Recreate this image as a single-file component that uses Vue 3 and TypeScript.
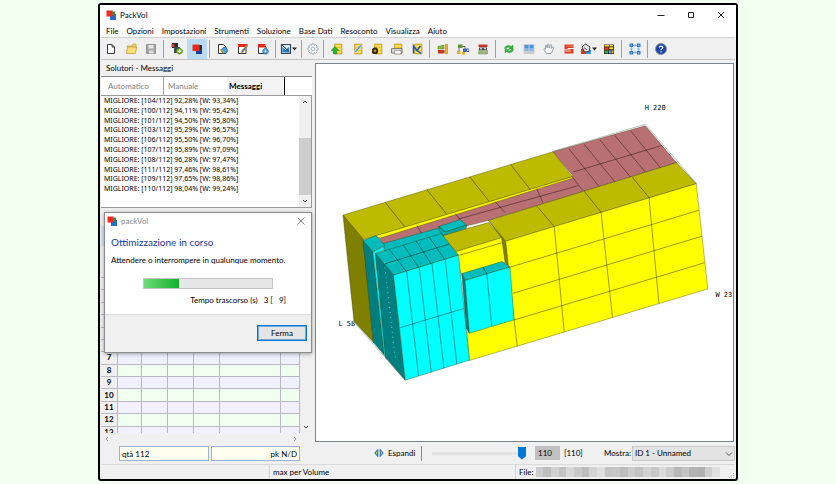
<script setup lang="ts">
import { ref } from 'vue'

interface Shape {
  d: string
  fill?: string
  stroke?: string
  w?: number
}
interface Tool {
  label: string
  shapes: Shape[]
  kind?: 'active' | 'narrow' | 'drop'
}

const menus = ['File', 'Opzioni', 'Impostazioni', 'Strumenti', 'Soluzione', 'Base Dati', 'Resoconto', 'Visualizza', 'Aiuto']

const database: Shape[] = [
  { d: 'M3.500 1h7.500v10H3.500z', fill: '#f5c518', stroke: '#b08410', w: 0.5 },
  { d: 'M4.500 2.500h5.500v1H4.500zM4.500 5.500h5.500v1H4.500zM4.500 8.500h5.500v1H4.500z', fill: '#fff3a8' },
]
const page: Shape = { d: 'M1.500 1.500h5l2.500 2.500v6.500H1.500z', fill: '#fff', stroke: '#333', w: 1 }
const arrow: Shape = { d: 'M12 4.500h5l-2.500 3z', fill: '#222' }

const groups: Tool[][] = [
  [
    { label: 'Nuovo', shapes: [{ d: 'M2.500 1.500h4.500l2.500 2.500v6.500h-7zM7 1.500v2.500h2.500', fill: '#fff', stroke: '#3a3a3a', w: 1 }] },
    {
      label: 'Apri',
      shapes: [
        { d: 'M2 3h5l1-2h3v3H2z', fill: '#efd27a', stroke: '#c79d34', w: 0.7 },
        { d: 'M1.500 10.500l1-6.500h9l-1 6.500z', fill: '#fbe07a', stroke: '#c79d34', w: 0.8 },
      ],
    },
    {
      label: 'Salva',
      shapes: [
        { d: 'M1.500 1.500h9v9h-9z', fill: '#a8a8a8', stroke: '#929292', w: 1 },
        { d: 'M3.500 2h5v3.500h-5z', fill: '#e6e6e6' },
        { d: 'M4 7.500h4.500v3H4z', fill: '#dcdcdc' },
      ],
    },
  ],
  [
    {
      label: 'Aggiungi collo',
      shapes: [
        { d: 'M1 0h6v5H1z', fill: '#252d36' },
        { d: 'M0.500 1h3v3h-3z', fill: '#d43c2e' },
        { d: 'M3 4h6v6H3z', fill: '#3b4d57' },
        { d: 'M8.500 5.200a3 3 0 1 0 .01 0z', fill: '#7cbd2b', stroke: '#4b861c', w: 0.6 },
        { d: 'M8.500 6.500v3.400M6.800 8.200h3.400', stroke: '#fff', w: 1.1 },
      ],
    },
    {
      label: 'Risolvi',
      kind: 'active',
      shapes: [
        { d: 'M5 5h6v6H5z', fill: '#1c3f9e' },
        { d: 'M6 2h5v5H6z', fill: '#203324' },
        { d: 'M1.500 1.500h7v6.500h-7z', fill: '#f0281e' },
      ],
    },
  ],
  [
    {
      label: 'Anteprima',
      shapes: [
        page,
        { d: 'M7.500 4.500a3 3 0 1 0 .01 0z', fill: '#4ea3dc', stroke: '#1c5b90', w: 0.8 },
        { d: 'M3 6.500l4 3.500', stroke: '#d89b20', w: 1.3 },
      ],
    },
    {
      label: 'Modifica PDF',
      shapes: [
        page,
        { d: 'M1 1h9.500v3H1z', fill: '#e4271c' },
        { d: 'M10.500 3.500l-4.500 6-2 .5.500-2 4.500-5.500z', fill: '#3d76c4', stroke: '#e5ad2e', w: 0.7 },
      ],
    },
    {
      label: 'Opzioni PDF',
      shapes: [
        page,
        { d: 'M1 1h7.500v3.500H1z', fill: '#e4271c' },
        { d: 'M8.500 5.500a2.800 2.800 0 1 0 .01 0z', fill: '#4798dd', stroke: '#1f69ad', w: 0.7 },
        { d: 'M8.500 7.200a1 1 0 1 0 .01 0z', fill: '#fff' },
      ],
    },
  ],
  [
    {
      label: 'Esporta immagine',
      kind: 'drop',
      shapes: [
        { d: 'M1.500 1.500h9v9h-9z', fill: '#d8ecfa', stroke: '#34495e', w: 1.2 },
        { d: 'M2.500 9.500V4l3 3 3.500-3v5.500z', fill: '#2d7fc4' },
        { d: 'M2 2l7.500 7', stroke: '#263746', w: 1 },
        arrow,
      ],
    },
  ],
  [
    {
      label: 'Preferenze',
      kind: 'narrow',
      shapes: [
        { d: 'M5 .8h2l.4 1.500 1.300-.7 1.500 1.500-.8 1.300 1.600.5v2l-1.600.5.8 1.300-1.500 1.500-1.300-.8-.4 1.600H5l-.5-1.600-1.300.8-1.500-1.500.8-1.300L.9 6.900v-2l1.600-.5-.8-1.300 1.500-1.500 1.300.7z', fill: '#f7f9fa', stroke: '#8d99a3', w: 0.8 },
        { d: 'M6 4.200a1.800 1.800 0 1 0 .01 0z', fill: '#fff', stroke: '#8d99a3', w: 0.8 },
      ],
    },
  ],
  [
    { label: 'Carica base dati', shapes: [...database, { d: 'M4 3.500l4 4H5.700v3.500H2.300V7.500H0z', fill: '#27b52c', stroke: '#107016', w: 0.4 }] },
    { label: 'Modifica base dati', shapes: [...database, { d: 'M11 2.500l-5.500 6.500-2 .8.300-2 5.500-6z', fill: '#4d8edb', stroke: '#e8f1fb', w: 0.6 }] },
    { label: 'Cerca base dati', shapes: [...database, { d: 'M1 6l2-1.500h2.500L7 6v4L5.500 11H2.500L1 10z', fill: '#3f2c0a' }, { d: 'M4 6.500a1.200 1.200 0 1 0 .01 0z', fill: '#c79a35' }] },
    { label: 'Stampa base dati', shapes: [...database, { d: 'M.5 5.500h10.500v4.500H.5z', fill: '#d9d9d9', stroke: '#666', w: 0.8 }, { d: 'M3.500 7.500h6.500v3.500H3.500z', fill: '#fff', stroke: '#777', w: 0.6 }] },
    { label: 'Statistiche', shapes: [...database, { d: 'M2.500 10.500V3l3.500 4.500L9.500 3M6 7.500l4 3', stroke: '#1d56b5', w: 1.5 }] },
  ],
  [
    { label: 'Colli', shapes: [{ d: 'M1 3.500l6-1.500v4H1z', fill: '#8fb93c', stroke: '#56751a', w: 0.5 }, { d: 'M1 7h6.500v3.500H1z', fill: '#c2391f' }, { d: 'M8.500 1.500h2v9h-2z', fill: '#f4ba2c', stroke: '#9a6c0c', w: 0.5 }] },
    { label: 'Gruppi', shapes: [{ d: 'M1 1.500h4.500V5H1z', fill: '#5a9a32' }, { d: 'M6 5.500h3.500V9H6z', fill: '#3f69b6' }, { d: 'M0 8h3.500v3H0zM5 9h3v2.500H5z', fill: '#e4ad2a' }, { d: 'M9.500 6h2.500v2.500H9.500z', fill: '#fff', stroke: '#294c96', w: 0.9 }, { d: 'M2 5v3M5.500 3.500h2.500v2', stroke: '#333', w: 0.7 }] },
    { label: 'Strati', shapes: [{ d: 'M1.500 1.500h9v2.500h-9z', fill: '#c83525' }, { d: 'M2 4.500h8v2.500H2z', fill: '#474747' }, { d: 'M3 5.200h2v1H3zM7 5.200h2v1H7z', fill: '#fff' }, { d: 'M1.500 7.500h9v3.500h-9z', fill: '#9db785', stroke: '#6c8655', w: 0.5 }] },
  ],
  [
    { label: 'Aggiorna', shapes: [{ d: 'M1.500 5.500C2 2.500 6 1.500 8.300 3.400L10 2v4H5.800l1.300-1.300C5.500 3.800 4 4.500 3.500 5.500z', fill: '#35b53d', stroke: '#178a20', w: 0.4 }, { d: 'M10.500 6.500C10 9.500 6 10.500 3.700 8.600L2 10V6.500h4.200L5 7.500c1.500.9 3 .2 3.500-1z', fill: '#35b53d', stroke: '#178a20', w: 0.4 }] },
    { label: 'Viste', shapes: [{ d: 'M.5 1h11v10H.5z', fill: '#c8cdd2' }, { d: 'M1.500 2h4v3.500h-4zM6.500 2h4v3.500h-4z', fill: '#4b91e2' }, { d: 'M1.500 6h4v2h-4zM6.500 6h4v2h-4z', fill: '#82b8f0' }] },
    { label: 'Sposta', shapes: [{ d: 'M3.500 10.500L1 6.500c0-1 1-1.200 1.800-.2L2.300 3c.2-.8 1-.8 1.300 0L4.300 5 4.500 1.700c.3-.8 1.200-.8 1.400 0L6.200 5l1-3c.4-.7 1.200-.5 1.200.3L8.200 5.500 9.500 4c.7-.4 1.300 0 1 .8L9.500 8 8 10.500z', fill: '#fff', stroke: '#7d8995', w: 0.8 }] },
    { label: 'Sezione', shapes: [{ d: 'M1.500 1.500h9V5H4.500v1h6v4.500h-9V7.500h6v-1h-6z', fill: '#db3f25' }, { d: 'M3.500 3h7M1.500 8.500H8', stroke: '#f5b092', w: 0.6 }] },
    { label: 'Colori', kind: 'drop', shapes: [{ d: 'M1 6h5v5H1z', fill: '#e83124' }, { d: 'M6 7h5v4H6z', fill: '#3898e0' }, { d: 'M2 4l3.500-3 4.500 3-1 4.500-4.500.5z', fill: '#e9e9e9', stroke: '#3c3c3c', w: 1 }, { d: 'M4 4.500l3 2.500', stroke: '#555', w: 1 }, arrow] },
    { label: 'Blocchi', shapes: [{ d: 'M1 1.500h10v9.500H1z', fill: '#1f1f1f' }, { d: 'M1.500 2h4.500v1.500H1.500zM6.800 2H10v1.500H6.800z', fill: '#ffe12a' }, { d: 'M1.500 4.300h4v2.500h-4z', fill: '#f03a26' }, { d: 'M6.300 4.300h4v2h-4z', fill: '#ffe12a' }, { d: 'M1.500 7.500h3.500v3H1.500z', fill: '#43a336' }, { d: 'M5.800 7.200h2v3.300h-2z', fill: '#33b4e8' }, { d: 'M8.500 7.200h2v3.300h-2z', fill: '#f7a229' }] },
  ],
  [
    { label: 'Adatta', shapes: [{ d: 'M2.500 2.500h7v7h-7zM6 1v3M6 8v3M1 6h3M8 6h3', stroke: '#7fb2e6', w: 0.9 }, { d: 'M.5.5H4V4H.5zM8 .5h3.500V4H8zM.5 8H4v3.500H.5zM8 8h3.500v3.500H8z', fill: '#2b6fcb' }, { d: 'M1.500 1.500h1.200v1.200H1.500zM9.200 1.500h1.200v1.200H9.200zM1.500 9.200h1.200v1.200H1.500zM9.200 9.200h1.200v1.200H9.200z', fill: '#bfe0ff' }] },
  ],
  [
    { label: 'Guida', shapes: [{ d: 'M6 .5a5.500 5.500 0 1 0 .01 0z', fill: '#1b46a8', stroke: '#8b93a2', w: 1 }, { d: 'M4.300 4.600C4.300 2.600 7.800 2.600 7.800 4.600 7.800 5.800 6 5.800 6 7.300M6 8.300v1.200', stroke: '#fff', w: 1.200 }] },
  ],
]

const messages = [
  '[104/112] 92,28% [W: 93,34%]',
  '[100/112] 94,11% [W: 95,42%]',
  '[101/112] 94,50% [W: 95,80%]',
  '[103/112] 95,29% [W: 96,57%]',
  '[106/112] 95,50% [W: 96,70%]',
  '[107/112] 95,89% [W: 97,09%]',
  '[108/112] 96,28% [W: 97,47%]',
  '[111/112] 97,46% [W: 98,61%]',
  '[109/112] 97,65% [W: 98,86%]',
  '[110/112] 98,04% [W: 99,24%]',
]

const step = ref(110)

// Faces of the packed load, painted back to front.
const faces: [string, string][] = [
  ['pink', '378,237 573,176 553,152 645.5,126 677,163 488,221 384,247'],
  ['olive-top', '342.5,215.5 553,152 572.5,177 377,236 363,240'],
  ['yellow', '375,236.5 572.500,177 572.500,178.500 380,238.500'],
  ['olive-dark', '342.500,215.500 363,240 373,343 353.500,322'],
  ['teal', '383,244 440,228 443,236 384,252'],
  ['olive-top', '440,236.500 488.500,223 502,238 456,252'],
  ['yellow', '456,252 502,238 507,263 461,276'],
  ['olive-dark', '488.500,221 505.700,241.700 510,268 505,263 501.500,238'],
  ['olive-top', '488.500,221 677,163 696.700,184 505.700,241.700'],
  ['yellow', '505.700,241.700 696.700,184 708.300,289.500 469.300,361.300 466.500,333 514,320'],
  ['teal', '438.500,227 460,220 466.500,225.500 445,232.500'],
  ['teal-mid', '438.500,227 445,232.500 466.500,225.500 466,229 443,236 439,231'],
  ['teal', '362.500,241 375.500,236 384.500,246 372.500,252.500'],
  ['teal-dark', '362.500,241 372.500,252.500 384,356 373,343'],
  ['cyan', '372.500,252.500 384,247 383,251 375,254 386,358 384,356'],
  ['teal', '375,254 441,234 458.300,255.700 393.300,275.700'],
  ['teal-dark', '375,254 393.300,275.700 405,381 385,358'],
  ['cyan', '393.300,275.700 458.300,255.700 469.300,361 405,381'],
  ['teal', '461.700,274 502,262 510,267.500 465,281'],
  ['teal-dark', '461.700,274 465,281 469.300,334 466,329'],
  ['cyan', '465,281 510,267.500 514,320.500 469.300,334'],
]

const seams = [
  'M385 203L404.300 227M426.700 190.200L446.700 214.700M469.700 177.300L489 201.700M510.700 164.800L530 189.500',
  'M573.300 172.300L662.300 145.700M458 219.500L578.300 186M569 149L599 186.500M584.300 144.500L615 182M600 140L630.700 177.300M615 135.500L645.700 172.500M631 131L660.700 168M573 178L583 191M536.700 189L543 203M416.700 226L421 233.500M455 214L460 220M495 202L505 213',
  'M536.700 206.200L554.300 227M584.300 191.500L601.300 212.700M632.300 177L649.300 198',
  'M554.300 227L564.300 332.500M601.300 212.700L612.700 318M649.300 198L659.300 304M514 320L517.300 347',
  'M510 267.700L699.300 210.700M512.700 294L702.300 236.700M514 320.700L705 263.300M459.300 255.700L501.700 243.300',
  'M406 272L389 250M418.500 268L403 245.500M431 264.500L416 241.500M445 260.500L429 237.800M384 264.500L449 244.500',
  'M406.300 271.700L418.300 376.700M419 268L431 373M431.700 264L443.700 369M445 260L456.700 365M400 328.300L463.300 309.300M486.700 274.300L491.700 327M483 268L486.700 274.300',
]

const gridRows = Array.from({ length: 13 }, (_, i) => i + 1)
const mosaic = ['#cbcbcb', '#bdbdbd', '#cfcfcf', '#c2c2c2', '#d8d8d8', '#c9c9c9', '#bcbcbc', '#d4d4d4', '#dedede', '#c4c4c4', '#c6c6c6', '#bebebe', '#cccccc', '#c3c3c3', '#d2d2d2', '#c8c8c8', '#dadada', '#cacaca', '#b9b9b9', '#c5c5c5', '#b3b3b3', '#b0b0b0', '#cdcdcd', '#e0e0e0']
</script>

<template>
  <div class="page">
    <main class="window">
      <header class="titlebar">
        <svg class="logo" viewBox="0 0 10 10" aria-hidden="true">
          <rect x="4" y="4" width="6" height="6" fill="#1f6fd0" />
          <rect x="5" y="1.500" width="4" height="4" fill="#2f8f3f" />
          <rect x="0.500" y="0.500" width="6" height="6" fill="#ed2b22" />
        </svg>
        <h1>PackVol</h1>
        <button class="caption" aria-label="Riduci"><svg viewBox="0 0 8 8"><path d="M.5 4.500h7" /></svg></button>
        <button class="caption" aria-label="Ingrandisci"><svg viewBox="0 0 8 8"><path d="M1.500 1.500h5v5h-5z" /></svg></button>
        <button class="caption" aria-label="Chiudi"><svg viewBox="0 0 8 8"><path d="M1 1l6 6M7 1L1 7" /></svg></button>
      </header>

      <nav class="menubar">
        <button v-for="m in menus" :key="m">{{ m }}</button>
      </nav>

      <div class="toolbar" role="toolbar">
        <div v-for="(g, i) in groups" :key="i" class="group">
          <button v-for="t in g" :key="t.label" :class="['tool', t.kind]" :aria-label="t.label">
            <svg :viewBox="t.kind === 'drop' ? '0 0 18 12' : '0 0 12 12'">
              <path v-for="(s, k) in t.shapes" :key="k" :d="s.d" :fill="s.fill ?? 'none'" :stroke="s.stroke ?? 'none'" :stroke-width="s.w ?? 0" />
            </svg>
          </button>
        </div>
      </div>

      <div class="body">
        <section class="side">
          <h2>Solutori - Messaggi</h2>
          <div class="tabs" role="tablist">
            <button role="tab">Automatico</button>
            <button role="tab">Manuale</button>
            <button role="tab" class="on" aria-selected="true">Messaggi</button>
          </div>
          <div class="log">
            <ul>
              <li v-for="m in messages" :key="m">MIGLIORE: {{ m }}</li>
            </ul>
            <div class="scroll">
              <button aria-label="Su"><svg viewBox="0 0 6 6"><path d="M1 4l2-2 2 2" /></svg></button>
              <span class="track"><span class="thumb"></span></span>
              <button aria-label="Giù"><svg viewBox="0 0 6 6"><path d="M1 2l2 2 2-2" /></svg></button>
            </div>
          </div>
          <div class="strip"></div>
          <div class="gridbox">
            <div class="gridclip">
              <table>
                <colgroup>
                  <col class="c-head" /><col class="c-a" /><col class="c-b" /><col class="c-b" /><col class="c-b" /><col class="c-wide" /><col class="c-last" />
                </colgroup>
                <thead>
                  <tr><th v-for="c in 7" :key="c"></th></tr>
                </thead>
                <tbody>
                  <tr v-for="n in gridRows" :key="n">
                    <th scope="row">{{ n }}</th>
                    <td v-for="c in 6" :key="c"></td>
                  </tr>
                </tbody>
              </table>
            </div>
            <div class="scroll plain">
              <button aria-label="Giù"><svg viewBox="0 0 6 6"><path d="M1 2l2 2 2-2" /></svg></button>
            </div>
          </div>
          <div class="hscroll">
            <button aria-label="Sinistra"><svg viewBox="0 0 6 6"><path d="M4 1L2 3l2 2" /></svg></button>
            <button aria-label="Destra"><svg viewBox="0 0 6 6"><path d="M2 1l2 2-2 2" /></svg></button>
          </div>
          <div class="totals">
            <input aria-label="Quantità" value="qtà 112" />
            <input aria-label="Peso" class="right" value="pk N/D" />
          </div>

          <div class="dialog" role="dialog" aria-labelledby="dlg-title">
            <div class="dlg-bar">
              <svg class="logo" viewBox="0 0 10 10" aria-hidden="true">
                <rect x="4" y="4" width="6" height="6" fill="#1f6fd0" />
                <rect x="5" y="1.500" width="4" height="4" fill="#2f8f3f" />
                <rect x="0.500" y="0.500" width="6" height="6" fill="#ed2b22" />
              </svg>
              <span>packVol</span>
              <button aria-label="Chiudi"><svg viewBox="0 0 8 8"><path d="M.5.500l7 7M7.500.500l-7 7" /></svg></button>
            </div>
            <div class="dlg-body">
              <h3 id="dlg-title">Ottimizzazione in corso</h3>
              <p>Attendere o interrompere in qualunque momento.</p>
              <progress max="100" value="27" aria-label="Avanzamento"></progress>
              <div class="elapsed"><span>Tempo trascorso (s)</span><span>3 [&nbsp;&nbsp; 9]</span></div>
            </div>
            <div class="dlg-foot"><button>Ferma</button></div>
          </div>
        </section>

        <section class="view">
          <div class="canvas">
            <svg viewBox="316 64 417 378" role="img" aria-label="Carico 3D">
              <text x="338" y="327">L 58</text>
              <polyline class="frame" points="553,151.500 645.500,124.500 680,164 697,184" />
              <polyline class="frame" points="353,322 405,381.500" />
              <polygon v-for="(f, i) in faces" :key="i" :class="f[0]" :points="f[1]" />
              <path v-for="(s, i) in seams" :key="i" class="seam" :d="s" />
              <path class="dots" d="M384 263L395 360" />
              <text x="645" y="110">H 220</text>
              <text x="716" y="298">W 23</text>
            </svg>
          </div>
          <div class="controls">
            <button class="expand">
              <svg viewBox="0 0 10 10"><path d="M3.800 1.500v7L.8 5z" /><path d="M6.200 1.500v7l3-3.500z" /></svg>
              Espandi
            </button>
            <input v-model.number="step" class="slider" type="range" min="0" max="110" aria-label="Passo" />
            <input class="num" :value="step" aria-label="Numero passo" />
            <span class="total">[110]</span>
            <label for="show">Mostra:</label>
            <div class="pick">
              <select id="show"><option>ID 1 - Unnamed</option></select>
              <svg viewBox="0 0 8 8"><path d="M1 2.500l3 3 3-3" /></svg>
            </div>
          </div>
        </section>
      </div>

      <footer class="status">
        <span class="cell first"></span>
        <span class="cell mid">max per Volume</span>
        <span class="cell last">File:
          <span class="mosaic"><i v-for="(c, i) in mosaic" :key="i" :style="{ background: c }"></i></span>
          <svg class="grip" viewBox="0 0 6 6"><path d="M4 0h1v1H4zM2 2h1v1H2zM4 2h1v1H4zM0 4h1v1H0zM2 4h1v1H2zM4 4h1v1H4z" /></svg>
        </span>
      </footer>
    </main>
  </div>
</template>

<style>
body {
  background: #f0fff0;
}
</style>

<style scoped>
* {
  box-sizing: border-box;
}
.page {
  height: 100vh;
  padding: 3px 98px;
  font: 8px/12px Lato, "Noto Sans", sans-serif;
  color: #000;
}
button,
input,
select {
  font: inherit;
  color: inherit;
  margin: 0;
  padding: 0;
  border: 0;
  background: none;
}
h1,
h2,
h3,
p,
ul {
  margin: 0;
  padding: 0;
  font-weight: 400;
  font-size: inherit;
  list-style: none;
}
.window {
  display: flex;
  flex-direction: column;
  height: 100%;
  padding: 0 1px;
  border: 2px solid #000;
  border-radius: 3px;
  background: #f0f0f0;
}
.titlebar {
  display: flex;
  align-items: center;
  height: 20px;
  padding-left: 6px;
  margin: 0 -1px;
  background: #fff;
}
.logo {
  width: 10px;
  height: 10px;
  margin-right: 4px;
}
.titlebar h1 {
  flex: 1;
}
.caption {
  display: flex;
  justify-content: center;
  width: 30px;
}
.caption svg {
  width: 8px;
  height: 8px;
}
.caption path,
.dlg-bar button path {
  fill: none;
  stroke: #222;
  stroke-width: 1;
}
.menubar {
  display: flex;
  gap: 8px;
  height: 12px;
  margin: 0 -1px;
  padding-left: 6px;
  background: #fff;
}
.toolbar {
  display: flex;
  height: 23px;
  border-top: 1px solid #d0d0d0;
  border-bottom: 1px solid #c4c4c4;
}
.group {
  display: flex;
  align-items: center;
}
.group + .group::before {
  content: "";
  width: 1px;
  height: 18px;
  margin: 0 3px 0 2px;
  background: #a0a0a0;
}
.tool {
  display: flex;
  align-items: center;
  justify-content: center;
  width: 20px;
  height: 20px;
}
.tool svg {
  width: 12px;
  height: 12px;
}
.tool.narrow {
  width: 16px;
}
.tool.drop svg {
  width: 18px;
}
.tool.active {
  background: #b9daf5;
}
.body {
  display: flex;
  flex: 1;
  gap: 3px;
  min-height: 0;
}
.side {
  position: relative;
  display: flex;
  flex-direction: column;
  width: 211px;
}
.side h2 {
  height: 16px;
  padding: 2px 5px;
}
.tabs {
  display: flex;
  height: 19px;
  border-top: 1px solid #8a8a8a;
  background: #fff;
}
.tabs button {
  width: 63px;
  padding-left: 7px;
  text-align: left;
  border-right: 1px solid #a0a0a0;
  color: #808080;
}
.tabs button + button {
  padding-left: 4px;
}
.tabs button:nth-child(2) {
  border-right: 0;
}
.tabs button.on {
  width: 58px;
  padding-left: 2px;
  border-right: 1px solid #000;
  background: linear-gradient(90deg, #f3f3f3 56px, #fff 56px);
  font-weight: 700;
  color: #000;
}
.log {
  display: flex;
  height: 113px;
  border: 1px solid #9a9a9a;
  border-left: 0;
  background: #fff;
}
.log ul {
  display: flex;
  flex: 1;
  flex-direction: column;
  height: 98px;
  padding-left: 3px;
  font-family: "Noto Sans", sans-serif;
  font-size: 7px;
}
.log li {
  flex: 1;
  min-height: 0;
  line-height: 10px;
  white-space: nowrap;
}
.scroll {
  display: flex;
  flex-direction: column;
  width: 12px;
  background: #f0f0f0;
}
.scroll button {
  display: flex;
  justify-content: center;
  padding: 3px 0;
}
.scroll svg,
.hscroll svg {
  width: 6px;
  height: 6px;
  fill: none;
  stroke: #444;
  stroke-width: 1;
}
.hscroll svg {
  stroke: #999;
}
.track {
  display: flex;
  flex: 1;
  flex-direction: column;
  justify-content: flex-end;
}
.thumb {
  height: 66%;
  background: #cdcdcd;
}
.scroll.plain {
  justify-content: flex-end;
}
.strip {
  height: 20px;
  margin: 18px 0 20px;
  background: #cfe3f7;
}
.gridbox {
  display: flex;
  flex: 1;
  min-height: 0;
  overflow: hidden;
}
.gridclip {
  flex: 1;
  overflow: hidden;
}
table {
  width: 100%;
  height: 173px;
  table-layout: fixed;
  border-collapse: separate;
  border-spacing: 0;
}
.c-head { width: 17px; }
.c-a { width: 24px; }
.c-b { width: 26px; }
.c-last { width: 19px; }
tr {
  height: 12px;
}
th,
td {
  padding: 0;
  border: solid #b9b9c4;
  border-width: 0 1px 1px 0;
}
th {
  background: #f0f0f0;
  line-height: 9px;
}
tr td {
  background: #f0f0ff;
}
tr:nth-child(even) td {
  background: #f0fff0;
}
.hscroll {
  display: flex;
  justify-content: space-between;
  height: 12px;
  padding: 0 14px 0 3px;
}
.hscroll button {
  display: flex;
  align-items: center;
}
.totals {
  display: flex;
  gap: 2px;
  height: 18px;
  margin: 1px 12px 0 18px;
  padding-bottom: 3px;
}
.totals input {
  flex: 1;
  min-width: 0;
  padding: 0 2px;
  border: 1px solid #9ab3d0;
  background: #fffff0;
}
.totals .right {
  text-align: right;
}
.dialog {
  position: absolute;
  left: 3px;
  right: 0;
  top: 152px;
  display: flex;
  flex-direction: column;
  height: 141px;
  border: 1px solid #8c8c8c;
  background: #fff;
  box-shadow: 0 1px 4px rgb(0 0 0 / 35%);
}
.dlg-bar {
  display: flex;
  align-items: center;
  height: 15px;
  padding: 0 6px 0 2px;
  color: #888;
}
.dlg-bar span {
  flex: 1;
}
.dlg-bar button {
  display: flex;
}
.dlg-bar button svg {
  width: 8px;
  height: 8px;
}
.dlg-bar button path {
  stroke: #888;
}
.dlg-body {
  display: flex;
  flex: 1;
  flex-direction: column;
  padding: 6px 25px 0 6px;
}
.dlg-body h3 {
  font-size: 10px;
  line-height: 16px;
  color: #1b3a9c;
}
.dlg-body p {
  margin-top: 4px;
  white-space: nowrap;
}
progress {
  width: 130px;
  height: 11px;
  margin: 12px 0 0 32px;
  appearance: none;
  border: 1px solid #c4c4c4;
}
progress::-webkit-progress-bar {
  background: #e6e6e6;
}
progress::-webkit-progress-value {
  background: linear-gradient(90deg, #6fdc7c, #10b02a);
}
.elapsed {
  display: flex;
  justify-content: flex-end;
  gap: 6px;
  margin-top: 5px;
}
.dlg-foot {
  display: flex;
  justify-content: flex-end;
  height: 38px;
  padding: 10px 4px;
  border-top: 1px solid #dcdcdc;
  background: #f0f0f0;
}
.dlg-foot button {
  width: 50px;
  height: 16px;
  border: 1px solid #0078d7;
  outline: 1px solid #6ba9dc;
  outline-offset: -2px;
  background: #e5e5e5;
}
.view {
  display: flex;
  flex: 1;
  flex-direction: column;
  min-width: 0;
  padding-top: 3px;
}
.canvas {
  flex: 1;
  min-height: 0;
  margin-right: 1px;
  border: 1px solid #7c858d;
  background: #fff;
}
.canvas svg {
  display: block;
  width: 100%;
  height: 100%;
}
.canvas text {
  font: 7px "DejaVu Sans Mono", monospace;
  fill: #000;
}
polygon {
  stroke: #303000;
  stroke-opacity: 0.7;
  stroke-width: 0.5;
}
.pink { fill: #b97072; }
.olive-top { fill: #bdba00; }
.olive-dark { fill: #7f7f00; }
.yellow { fill: #ff0; }
.teal { fill: #00bcbc; }
.teal-mid { fill: #00a8a8; }
.teal-dark { fill: #007f80; }
.cyan { fill: #0ff; }
.frame {
  fill: none;
  stroke: #b8c4bc;
  stroke-width: 1;
}
.seam {
  fill: none;
  stroke: #000;
  stroke-opacity: 0.5;
  stroke-width: 0.8;
}
.dots {
  stroke: #5fd8d8;
  stroke-width: 1;
  stroke-dasharray: 1 4;
}
.controls {
  display: flex;
  align-items: center;
  height: 22px;
}
.expand {
  display: flex;
  align-items: center;
  gap: 4px;
  height: 15px;
  padding: 0 6px 0 59px;
  border-right: 1px solid #888;
}
.expand svg {
  width: 10px;
  height: 10px;
  fill: #a5cf4c;
  stroke: #1d62b8;
  stroke-width: 1;
}
.slider {
  flex: 1;
  min-width: 40px;
  height: 14px;
  margin: 0 9px 0 10px;
  appearance: none;
}
.slider::-webkit-slider-runnable-track {
  height: 3px;
  background: #e4e4e4;
}
.slider::-webkit-slider-thumb {
  appearance: none;
  width: 8px;
  height: 13px;
  margin-top: -5px;
  background: #0078d7;
  clip-path: polygon(0 0, 100% 0, 100% 75%, 50% 100%, 0 75%);
}
.num {
  width: 25px;
  height: 14px;
  padding: 0 3px;
  background: #c0c0c0;
}
.total {
  width: 44px;
  padding-left: 4px;
}
label {
  width: 28px;
}
.pick {
  position: relative;
  width: 103px;
}
.pick select {
  width: 100%;
  height: 15px;
  padding-left: 2px;
  appearance: none;
  border: 1px solid #c8c8c8;
  background: #e3e3e3;
}
.pick svg {
  position: absolute;
  right: 2px;
  top: 4px;
  width: 8px;
  height: 8px;
  fill: none;
  stroke: #555;
  pointer-events: none;
}
.status {
  display: flex;
  height: 15px;
  border-top: 1px solid #dadada;
}
.cell {
  display: flex;
  align-items: center;
  padding-left: 3px;
  border-left: 1px solid #d2d2d2;
}
.first {
  width: 168px;
  border-left: 0;
}
.mid {
  flex: 1;
}
.last {
  gap: 2px;
  width: 220px;
}
.mosaic {
  display: flex;
  flex: 1;
  height: 10px;
  margin-right: 4px;
}
.mosaic i {
  flex: 1;
}
.grip {
  align-self: flex-end;
  width: 6px;
  height: 6px;
  margin-left: 3px;
  fill: #a8a8a8;
}
</style>
